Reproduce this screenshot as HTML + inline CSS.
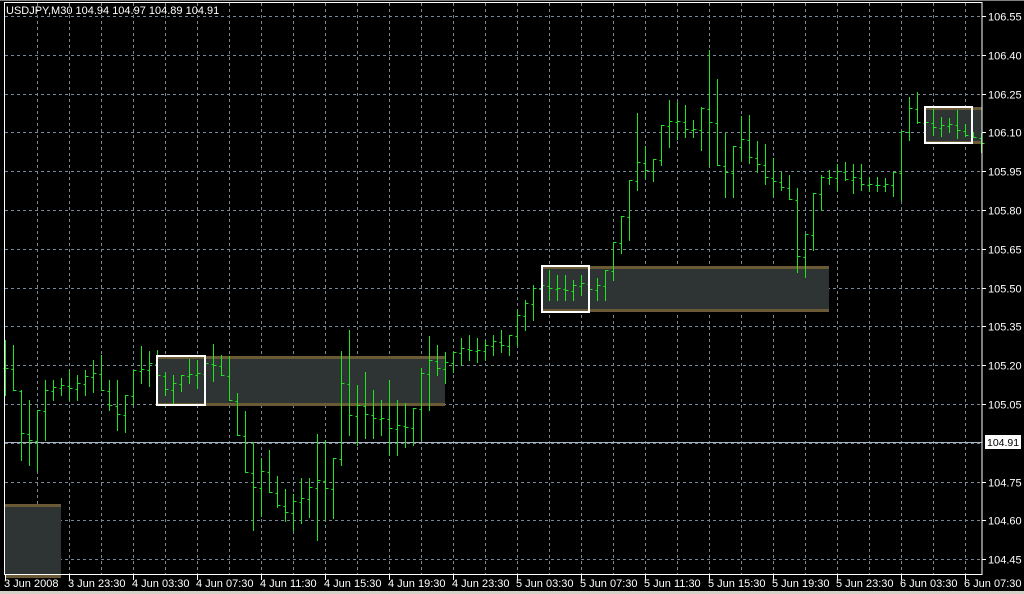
<!DOCTYPE html>
<html><head><meta charset="utf-8"><style>
html,body{margin:0;padding:0;background:#000;width:1024px;height:594px;overflow:hidden}
svg{display:block}
text{font-family:"Liberation Sans","DejaVu Sans",sans-serif;font-size:11px;fill:#fff}
</style></head><body>
<svg id="s" width="1024" height="594" xmlns="http://www.w3.org/2000/svg">
<rect x="0" y="0" width="1024" height="594" fill="#000"/>
<rect x="0" y="0" width="1024" height="1" fill="#808080"/>
<rect x="0" y="591" width="1024" height="3" fill="#d4d0c8"/>
<g id="grid" stroke="#778899" stroke-width="1" stroke-dasharray="3,3"></g>
<g id="rects"></g>
<line x1="5" y1="442.5" x2="982" y2="442.5" stroke="#aab4c0" stroke-width="1"/>
<g id="bars" stroke="#1ee61e" stroke-width="1" shape-rendering="crispEdges"></g>
<g fill="none" stroke="#fff" stroke-width="2">
<rect x="157" y="356" width="48" height="49"/>
<rect x="542" y="266" width="47" height="46"/>
<rect x="925" y="107" width="47" height="36"/>
</g>
<rect x="4.5" y="2.5" width="977.5" height="572" fill="none" stroke="#fff" stroke-width="1"/>
<g id="ticks" stroke="#fff"></g>
<text x="6" y="14">USDJPY,M30  104.94 104.97 104.89 104.91</text>
<g id="ylab"></g>
<rect x="985" y="435" width="36" height="14" fill="#fff"/>
<text x="987" y="446" style="fill:#000;font-size:10.5px">104.91</text>
<g id="xlab"></g>
</svg>
<script>
var NS="http://www.w3.org/2000/svg";
function el(p,t,a,txt){var e=document.createElementNS(NS,t);for(var k in a)e.setAttribute(k,a[k]);if(txt)e.textContent=txt;document.getElementById(p).appendChild(e);return e;}
var ys=[16,55,94,133,171,210,249,288,326,365,404,443,482,521,560];
var yl=["106.55","106.40","106.25","106.10","105.95","105.80","105.65","105.50","105.35","105.20","105.05","","104.75","104.60","104.45"];
for(var i=0;i<ys.length;i++){var y=Math.round(16+i*38.8)+0.5;
el("grid","line",{x1:5,y1:y,x2:982,y2:y});
if(yl[i]){el("ticks","line",{x1:982,y1:y,x2:986,y2:y});el("ylab","text",{x:988,y:y+4},yl[i]);}}
for(var x=37;x<982;x+=32){el("grid","line",{x1:x+0.5,y1:3,x2:x+0.5,y2:574});}
var xl=["3 Jun 2008","3 Jun 23:30","4 Jun 03:30","4 Jun 07:30","4 Jun 11:30","4 Jun 15:30","4 Jun 19:30","4 Jun 23:30","5 Jun 03:30","5 Jun 07:30","5 Jun 11:30","5 Jun 15:30","5 Jun 19:30","5 Jun 23:30","6 Jun 03:30","6 Jun 07:30"];
for(var i=0;i<xl.length;i++){var tx=i==0?5:69+(i-1)*64;el("ticks","line",{x1:tx+0.5,y1:575,x2:tx+0.5,y2:580});el("xlab","text",{x:tx-1,y:587},xl[i]);}
function rr(x,y,w,h){el("rects","rect",{x:x,y:y,width:w,height:h,fill:"#2e3333"});el("rects","rect",{x:x,y:y,width:w,height:3,fill:"#6b5a36"});el("rects","rect",{x:x,y:y+h-3,width:w,height:3,fill:"#6b5a36"});}
rr(5,504,56,74);rr(157,356,288,50);rr(542,266,287,46);rr(925,107,57,37);
var d=[[340,395],[345,390],[390,460],[400,465],[410,470],[380,440],[380,400],[378,395],[370,400],[375,400],[370,395],[360,392],[355,390],[380,410],[380,430],[395,432],[370,405],[346,383],[351,386],[350,375],[372,395],[375,403],[375,391],[359,383],[360,388],[363,383],[344,381],[355,375],[356,400],[393,435],[411,472],[442,530],[458,516],[450,492],[476,507],[489,521],[494,530],[478,523],[478,517],[434,540],[440,520],[458,518],[351,465],[330,435],[385,445],[372,438],[390,438],[400,435],[380,455],[400,455],[403,447],[408,445],[368,440],[336,410],[345,375],[352,383],[352,372],[338,365],[335,360],[338,362],[340,360],[335,355],[330,352],[335,355],[310,345],[300,330],[285,320],[275,300],[270,300],[275,300],[275,300],[280,300],[275,295],[270,295],[278,300],[270,300],[242,280],[216,253],[180,240],[113,190],[146,178],[159,181],[125,165],[100,147],[102,139],[105,137],[120,137],[107,150],[50,166],[79,165],[133,197],[146,197],[116,160],[115,163],[141,172],[144,184],[158,196],[172,190],[175,199],[188,272],[234,277],[193,250],[175,210],[170,184],[164,190],[162,180],[164,193],[164,190],[177,191],[177,191],[178,191],[172,196],[131,200],[97,140],[92,123],[118,126],[109,135],[117,136],[118,132],[110,138],[124,136],[132,137],[133,152]];
var prev=(d[0][0]+d[0][1])/2;
for(var i=0;i<d.length;i++){var x=5+8*i+0.5,h=d[i][0],l=d[i][1];
var o=Math.min(l,Math.max(h,prev));
var n=i+1<d.length?(d[i+1][0]+d[i+1][1])/2:(h+l)/2;var c=Math.min(l,Math.max(h,n));
c=Math.round(c)+0.5;o=Math.round(o)+0.5;
el("bars","line",{x1:x,y1:h,x2:x,y2:l+1});
el("bars","line",{x1:x-2,y1:o,x2:x,y2:o});
el("bars","line",{x1:x,y1:c,x2:x+3,y2:c});prev=c;}
</script>
</body></html>
